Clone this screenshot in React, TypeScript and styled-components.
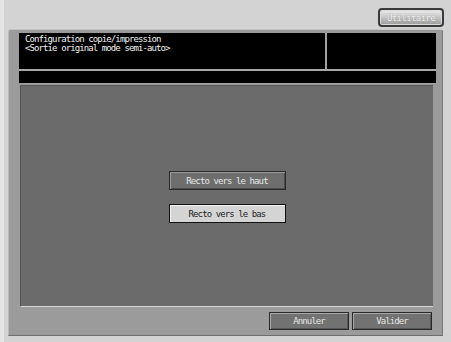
import React from "react";
import styled, { createGlobalStyle } from "styled-components";

const GlobalStyle = createGlobalStyle`
  html, body { margin: 0; padding: 0; background: #d3d3d3; }
  body { font-family: "DejaVu Sans Mono", "Liberation Mono", monospace; }
`;

const Screen = styled.div`
  width: 451px;
  height: 342px;
  background: #d3d3d3;
  border-left: 4px solid #e4e4e4;
  box-sizing: border-box;
  display: flex;
  flex-direction: column;
  overflow: hidden;
`;

const TopBar = styled.div`
  height: 29px;
  display: flex;
  justify-content: flex-end;
  align-items: flex-start;
  padding: 8px 7px 0 0;
  box-sizing: border-box;
`;

const UtilButton = styled.div`
  width: 66px;
  height: 19px;
  box-sizing: border-box;
  border: 2px solid #3a3a3a;
  border-radius: 4px;
  background: linear-gradient(#ececec, #c8c8c8 45%, #9a9a9a);
  box-shadow: inset 0 0 0 1px #dcdcdc;
  display: flex;
  align-items: center;
  justify-content: center;
  font-size: 9px;
  letter-spacing: -0.6px;
  color: #f2f2f2;
  text-shadow: 0 0 1px #8a8a8a;
`;

const Frame = styled.div`
  margin-left: 4px;
  width: 435px;
  height: 307px;
  box-sizing: border-box;
  background: #9b9b9b;
  border-top: 1px solid #c4c4c4;
  border-left: 1px solid #b8b8b8;
  border-right: 1px solid #7a7a7a;
  border-bottom: 1px solid #6e6e6e;
  border-radius: 3px 3px 0 0;
  padding: 3px 6px 0 10px;
  display: flex;
  flex-direction: column;
`;

const Header = styled.div`
  height: 36px;
  background: #000;
  display: grid;
  grid-template-columns: 306px 1fr;
  border-bottom: 2px solid #a8a8a8;
`;

const Title = styled.div`
  padding: 2px 0 0 6px;
  color: #f2f2f2;
  font-size: 9px;
  line-height: 9px;
  letter-spacing: -0.9px;
  white-space: pre;
`;

const SideCell = styled.div`
  border-left: 2px solid #a0a0a0;
`;

const InfoBar = styled.div`
  height: 12px;
  background: #000;
`;

const Panel = styled.div`
  margin: 2px 3px 0 1px;
  height: 222px;
  box-sizing: border-box;
  background: #6b6b6b;
  border-top: 1px solid #555;
  border-left: 1px solid #555;
  border-bottom: 1px solid #d6d6d6;
  display: flex;
  flex-direction: column;
  align-items: center;
  justify-content: center;
  gap: 14px;
  padding-top: 2px;
`;

const ChoiceButton = styled.div<{ $selected?: boolean }>`
  width: 117px;
  height: 19px;
  box-sizing: border-box;
  border: 1px solid ${(p) => (p.$selected ? "#111" : "#2a2a2a")};
  box-shadow: ${(p) =>
    p.$selected
      ? "inset 1px 1px 0 #f4f4f4"
      : "inset 1px 1px 0 #9a9a9a, inset -1px -1px 0 #4a4a4a"};
  background: ${(p) => (p.$selected ? "#d4d4d4" : "#6e6e6e")};
  color: ${(p) => (p.$selected ? "#222" : "#e6e6e6")};
  display: flex;
  align-items: center;
  justify-content: center;
  font-size: 9px;
  letter-spacing: -0.9px;
  white-space: pre;
`;

const Footer = styled.div`
  display: flex;
  justify-content: flex-end;
  gap: 3px;
  padding: 5px 4px 0 0;
`;

const FootButton = styled.div`
  width: 80px;
  height: 18px;
  box-sizing: border-box;
  border: 1px solid #2a2a2a;
  box-shadow: inset 1px 1px 0 #a8a8a8, inset -1px -1px 0 #555;
  background: #727272;
  color: #e4e4e4;
  display: flex;
  align-items: center;
  justify-content: center;
  font-size: 9px;
  letter-spacing: -0.9px;
`;

export default function App() {
  return (
    <>
      <GlobalStyle />
      <Screen>
        <TopBar>
          <UtilButton>Utilitaire</UtilButton>
        </TopBar>
        <Frame>
          <Header>
            <Title>
              {"Configuration copie/impression\n<Sortie original mode semi-auto>"}
            </Title>
            <SideCell />
          </Header>
          <InfoBar />
          <Panel>
            <ChoiceButton>Recto vers le haut</ChoiceButton>
            <ChoiceButton $selected>Recto vers le bas</ChoiceButton>
          </Panel>
          <Footer>
            <FootButton>Annuler</FootButton>
            <FootButton>Valider</FootButton>
          </Footer>
        </Frame>
      </Screen>
    </>
  );
}
